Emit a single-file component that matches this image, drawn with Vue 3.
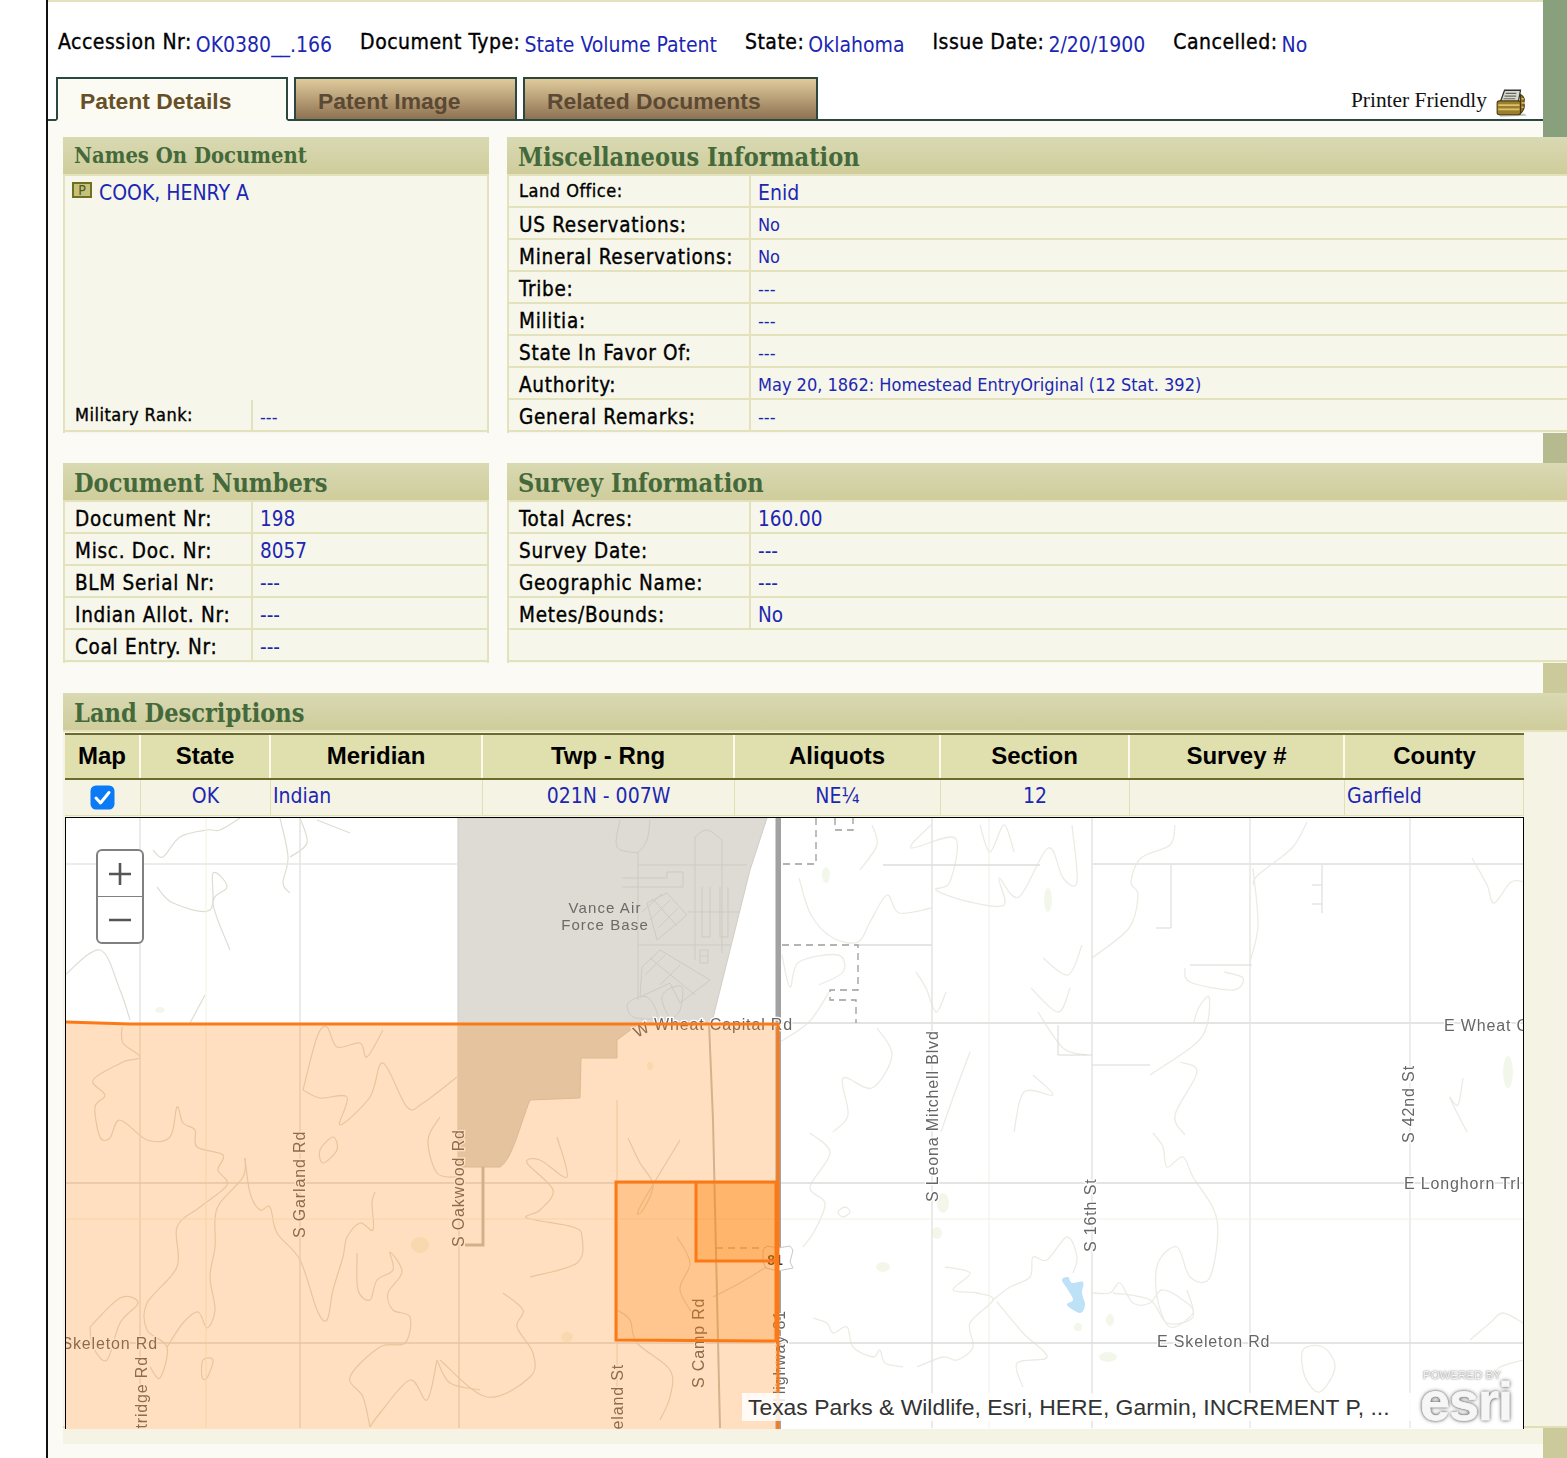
<script setup>
const info = [
  ['Accession Nr:', 'OK0380__.166'],
  ['Document Type:', 'State Volume Patent'],
  ['State:', 'Oklahoma'],
  ['Issue Date:', '2/20/1900'],
  ['Cancelled:', 'No']
]
const misc = [
  ['Land Office:', 'Enid', 'small', 'big'],
  ['US Reservations:', 'No', '', 'small'],
  ['Mineral Reservations:', 'No', '', 'small'],
  ['Tribe:', '---', '', 'small'],
  ['Militia:', '---', '', 'small'],
  ['State In Favor Of:', '---', '', 'small'],
  ['Authority:', 'May 20, 1862: Homestead EntryOriginal (12 Stat. 392)', '', 'small'],
  ['General Remarks:', '---', '', 'small']
]
const docs = [
  ['Document Nr:', '198'],
  ['Misc. Doc. Nr:', '8057'],
  ['BLM Serial Nr:', '---'],
  ['Indian Allot. Nr:', '---'],
  ['Coal Entry. Nr:', '---']
]
const survey = [
  ['Total Acres:', '160.00'],
  ['Survey Date:', '---'],
  ['Geographic Name:', '---'],
  ['Metes/Bounds:', 'No']
]
const heads = ['Map', 'State', 'Meridian', 'Twp - Rng', 'Aliquots', 'Section', 'Survey #', 'County']
const cells = [
  { t: 'OK' }, { t: 'Indian', left: true }, { t: '021N - 007W' }, { t: 'NE¼' }, { t: '12' }, { t: '' }, { t: 'Garfield', left: true }
]

function smooth(p, closed) {
  const n = p.length
  const at = i => closed ? p[(i + n) % n] : p[Math.max(0, Math.min(n - 1, i))]
  let d = `M${p[0][0]} ${p[0][1]}`
  const last = closed ? n : n - 1
  for (let i = 0; i < last; i++) {
    const a = at(i - 1), b = at(i), c = at(i + 1), e = at(i + 2)
    const c1x = b[0] + (c[0] - a[0]) / 6, c1y = b[1] + (c[1] - a[1]) / 6
    const c2x = c[0] - (e[0] - b[0]) / 6, c2y = c[1] - (e[1] - b[1]) / 6
    d += `C${c1x.toFixed(1)} ${c1y.toFixed(1)} ${c2x.toFixed(1)} ${c2y.toFixed(1)} ${c[0]} ${c[1]}`
  }
  return d + (closed ? 'Z' : '')
}

const openContours = [
  [[122,1027],[123,1043],[140,1057],[123,1062],[93,1080],[105,1095],[95,1107],[100,1137],[110,1138],[120,1120],[147,1140],[170,1137],[177,1107],[183,1123],[195,1130],[197,1147],[223,1155],[218,1170],[227,1185],[200,1207],[177,1227],[177,1267],[147,1303],[147,1330],[167,1347],[160,1378],[150,1367]],
  [[245,1158],[243,1177],[220,1203],[215,1220],[215,1247],[210,1277],[215,1310],[207,1328],[198,1312],[183,1323],[167,1347]],
  [[245,1158],[250,1193],[260,1210],[270,1207],[277,1233],[300,1260],[317,1310],[327,1320],[333,1290],[343,1257],[347,1237],[360,1223],[373,1230],[372,1203],[375,1192]],
  [[357,1253],[358,1290],[370,1300],[377,1280],[393,1270],[390,1252],[402,1272],[388,1293],[393,1310],[410,1317],[405,1343],[380,1347],[350,1377],[363,1397],[370,1427]],
  [[303,1090],[317,1037],[327,1027],[337,1047],[360,1043],[367,1057],[383,1030]],
  [[303,1090],[320,1098],[347,1097],[340,1125],[370,1097],[383,1063],[407,1107],[423,1103],[457,1077]],
  [[440,1117],[428,1140],[437,1173],[457,1177]],
  [[90,1327],[120,1298],[138,1303],[120,1323],[107,1360],[93,1347],[90,1327]],
  [[437,1360],[427,1400],[410,1380],[380,1413],[370,1427]],
  [[437,1360],[450,1383],[480,1390]],
  [[153,850],[163,857],[180,837],[207,830],[220,830],[240,818]],
  [[280,818],[288,857],[283,883],[290,893]],
  [[300,818],[307,843],[290,857]],
  [[317,820],[350,833]],
  [[157,887],[173,903],[210,910],[213,873],[227,887],[213,903],[230,950]],
  [[65,975],[100,950],[120,990],[130,1020]],
  [[190,1023],[205,995]],
  [[557,1137],[567,1177],[540,1160],[527,1163],[553,1190],[540,1210],[527,1218],[573,1227],[582,1237],[577,1263],[530,1277]],
  [[628,1138],[640,1163],[653,1185],[643,1210],[640,1207],[680,1140]],
  [[677,1237],[690,1263],[680,1290],[697,1320]],
  [[503,1293],[523,1310],[517,1327],[533,1353],[530,1377],[487,1397],[440,1360]],
  [[617,1310],[630,1320],[637,1343],[670,1370],[670,1397],[660,1420]],
  [[773,1263],[740,1283],[713,1297]]
]
const rightContours = [
  [[810,1133],[830,1153],[810,1187],[825,1203],[815,1230],[803,1247]],
  [[813,1318],[827,1323],[833,1333],[847,1327],[853,1347],[873,1357],[880,1350],[885,1363],[903,1367]],
  [[917,1367],[943,1357],[957,1360],[973,1347],[970,1323],[993,1300],[977,1293],[953,1290],[970,1273],[945,1267]],
  [[993,1300],[1010,1287],[1030,1277],[1033,1257],[1047,1260],[1067,1237],[1077,1257],[1073,1273]],
  [[997,1302],[1023,1333],[1047,1357],[1017,1363],[1023,1387]],
  [[1092,1293],[1110,1293],[1120,1283],[1133,1303],[1150,1303],[1162,1290],[1183,1300],[1193,1313],[1170,1327],[1157,1297],[1158,1263],[1177,1247],[1190,1277],[1210,1277],[1217,1220],[1193,1177],[1183,1157],[1167,1167],[1163,1147],[1153,1133]],
  [[1470,1340],[1490,1323],[1503,1313],[1523,1323]],
  [[1523,1360],[1500,1367],[1493,1377]],
  [[1113,1293],[1150,1300],[1167,1323],[1193,1317],[1187,1290]],
  [[799,878],[811,915],[833,938],[858,942],[870,922],[887,895],[899,913],[931,908]],
  [[872,825],[877,845],[860,870]],
  [[931,825],[911,848],[955,838],[950,882],[936,890],[970,902],[1004,905],[999,878],[1019,897],[1048,848],[1063,878],[1077,882],[1072,825]],
  [[980,825],[990,852],[1004,825],[1014,852]],
  [[819,985],[843,972],[838,955],[799,962],[790,987],[782,955]],
  [[829,992],[809,1022],[780,1042]],
  [[916,972],[926,988],[936,1012],[946,992]],
  [[877,1028],[892,1055],[872,1088],[843,1078],[848,1115],[833,1132]],
  [[970,1052],[955,1092],[941,1132]],
  [[1033,1075],[1053,1095],[1024,1092],[1014,1132]],
  [[1043,958],[1068,975],[1082,945]],
  [[1031,988],[1058,1012],[1070,988]],
  [[1038,1012],[1063,1048],[1087,1055]],
  [[1175,825],[1170,845],[1141,858],[1131,882],[1138,895],[1129,928],[1092,958]],
  [[1307,822],[1292,848],[1258,875],[1253,885]],
  [[1253,868],[1258,925],[1250,962]],
  [[1185,968],[1190,982],[1233,990],[1243,978],[1224,972]],
  [[1194,1022],[1199,1007],[1209,997],[1207,1025],[1194,1045],[1150,1075]],
  [[1180,1062],[1197,1072],[1175,1115],[1185,1135]],
  [[1472,858],[1487,885],[1494,903],[1511,882],[1524,882]],
  [[1463,1078],[1458,1105],[1450,1098],[1467,1132]]
]
const contoursLeft = [
  ...openContours.map(p => smooth(p, false)),
  smooth([[333,1137],[320,1150],[323,1163],[337,1150]], true),
  smooth([[203,1360],[213,1360],[207,1378],[202,1377]], true)
]
const contoursRight = [
  ...rightContours.map(p => smooth(p, false)),
  smooth([[838,1212],[845,1207],[850,1212],[843,1217]], true),
  smooth([[1303,1350],[1323,1347],[1335,1367],[1320,1392],[1305,1377]], true)
]
const lake = smooth([[1062,1280],[1068,1277],[1072,1283],[1083,1282],[1082,1293],[1085,1305],[1080,1313],[1067,1305],[1073,1300],[1068,1290]], true)
const blobA = smooth([[628,1003],[647,997],[657,1017],[633,1017]], true)
const blobB = smooth([[667,990],[682,987],[680,1010],[670,1017],[662,1000]], true)
const topLoop = smooth([[695,837],[707,830],[722,840]], false)
const baseCurveA = smooth([[620,820],[617,847],[638,853]], false)
const baseCurveB = smooth([[650,820],[647,840],[638,853]], false)

const patches = [
  [883,1267,7,5],[943,1203,6,10],[937,1233,5,6],[1078,1327,4,4],[1110,1320,4,6],[1108,1357,9,5],
  [1508,1072,5,16],[420,1245,9,8],[567,1337,6,5],[650,1066,3,4],[160,1010,5,3],[826,875,4,8],[1048,900,4,12]
]
const grid = [
  ['v',140,818,1428,'#e4e3df',1.4],['v',206,818,1428,'#f3f2df',1],['v',300,818,1428,'#e2e2df',1.4],
  ['v',459,1023,1428,'#dcdad5',1.2],['v',617,1100,1428,'#e2dfd6',1],['v',932,818,1428,'#e2e2e0',1.4],
  ['v',989,818,1428,'#efefe8',1],['v',1092,818,1428,'#e2e2e0',1.4],['v',1250,818,1428,'#e6e6e3',1.4],['v',1410,818,1428,'#e6e6e3',1.4],
  ['h',864,65,458,'#e6e6e4',1.4],['h',865,883,1040,'#dddddb',1.6],['h',864,1092,1524,'#e6e6e4',2],
  ['h',1023,780,1524,'#e4e4e2',2],['h',1183,65,1524,'#dddbd8',1.4],['h',1219,65,1524,'#f3f1e2',1],['h',1343,65,1524,'#dddbd8',1.6],
  ['h',945,858,932,'#dddddb',1.4],['h',1065,1092,1150,'#d8d8d5',1],['h',965,1190,1252,'#d8d8d5',1],
  ['h',928,1156,1171,'#d8d8d5',1],['v',1171,865,928,'#d8d8d5',1],['v',1322,865,913,'#d8d8d5',1],
  ['h',885,1312,1322,'#d8d8d5',1],['h',904,1312,1322,'#d8d8d5',1],['v',1058,1025,1055,'#d8d8d5',1],['h',1055,1058,1092,'#d8d8d5',1]
]
</script>

<template>
  <div class="page">
    <div class="gutter"></div>
    <div class="shell">
      <div class="band">
        <div class="band-main">
          <div class="info">
            <div v-for="i in info" :key="i[0]" class="info-item">
              <span class="info-label">{{ i[0] }}</span>
              <span class="info-value">{{ i[1] }}</span>
            </div>
          </div>
          <div class="tabs">
            <div class="tab active">Patent Details</div>
            <div class="tab t2">Patent Image</div>
            <div class="tab t3">Related Documents</div>
            <div class="printer">
              <span>Printer Friendly</span>
              <svg width="34" height="32" viewBox="0 0 32 30">
                <path d="M3 25 L28 25 L30 27 L5 28Z" fill="#999" opacity=".6" />
                <path d="M9 3 L24 3 L22 14 L5 14Z" fill="#d8d8cc" stroke="#333" stroke-width="1.2" />
                <path d="M10 6h10M9 8.5h11M8 11h11" stroke="#666" stroke-width="1.1" />
                <rect x="2" y="13" width="22" height="13" rx="2" fill="#9c7f2e" stroke="#4a3a10" />
                <path d="M3 17h20M3 21h20" stroke="#dcc26a" stroke-width="1.6" />
                <path d="M24 7 q5 3 3 8 q2 5 -3 10Z" fill="#8a6f28" stroke="#4a3a10" />
                <path d="M25 11h2M25 15h3M25 19h2" stroke="#dcc26a" stroke-width="1.2" />
              </svg>
            </div>
          </div>
          <div class="tab-gap"></div>
        </div>
        <div class="strip strip-a"></div>
      </div>

      <div class="row">
        <section class="panel p-left">
          <h2 class="head head-sm">Names On Document</h2>
          <div class="names">
            <span class="p-badge">P</span>
            <span class="name">COOK, HENRY A</span>
          </div>
          <div class="kv kv-left">
            <div class="k small">Military Rank:</div>
            <div class="v small">---</div>
          </div>
        </section>
        <section class="panel p-right">
          <h2 class="head">Miscellaneous Information</h2>
          <div v-for="m in misc" :key="m[0]" class="kv kv-right">
            <div class="k" :class="m[2]">{{ m[0] }}</div>
            <div class="v" :class="m[3]">{{ m[1] }}</div>
          </div>
        </section>
      </div>

      <div class="gap"><div class="gap-main"></div><div class="strip strip-b"></div></div>

      <div class="row">
        <section class="panel p-left">
          <h2 class="head">Document Numbers</h2>
          <div v-for="d in docs" :key="d[0]" class="kv kv-left">
            <div class="k">{{ d[0] }}</div>
            <div class="v">{{ d[1] }}</div>
          </div>
        </section>
        <section class="panel p-right">
          <h2 class="head">Survey Information</h2>
          <div v-for="s in survey" :key="s[0]" class="kv kv-right">
            <div class="k">{{ s[0] }}</div>
            <div class="v">{{ s[1] }}</div>
          </div>
          <div class="blank"></div>
        </section>
      </div>

      <div class="gap"><div class="gap-main"></div><div class="strip strip-c"></div></div>

      <div class="land-wrap">
        <section class="land">
          <h2 class="head land-head">Land Descriptions</h2>
          <div class="tbl thead">
            <div v-for="h in heads" :key="h" class="th">{{ h }}</div>
          </div>
          <div class="tbl tbody">
            <div class="td">
              <svg class="check" width="25" height="25" viewBox="0 0 25 25">
                <rect x="0.5" y="0.5" width="24" height="24" rx="5.5" fill="#0a7af5" />
                <path d="M6 13 L10.5 18 L19 7.5" fill="none" stroke="#fff" stroke-width="3" stroke-linecap="round" stroke-linejoin="round" />
              </svg>
            </div>
            <div v-for="(c, i) in cells" :key="i" class="td" :class="{ left: c.left }">{{ c.t }}</div>
          </div>
          <div class="map">
            <svg class="map-svg" width="1457" height="611" viewBox="66 818 1457 611">
              <rect x="65" y="818" width="1460" height="611" fill="#fff" />
              <ellipse v-for="(p, i) in patches" :key="'g' + i" :cx="p[0]" :cy="p[1]" :rx="p[2]" :ry="p[3]" fill="#f3f7ea" />
              <path d="M458 818 L767 818 L750 870 L715 1010 L712 1023 L640 1023 L617 1040 L617 1058 L581 1058 L580 1098 L530 1100 C520 1125 512 1160 500 1167 L458 1167Z" fill="#dedad4" stroke="#d0cdc6" />
              <path v-for="(d, i) in contoursLeft" :key="'cl' + i" :d="d" fill="none" stroke="#dfddd2" stroke-width="1.2" />
              <path v-for="(d, i) in contoursRight" :key="'cr' + i" :d="d" fill="none" stroke="#ecebe3" stroke-width="1.3" />
              <g v-for="(l, i) in grid" :key="'r' + i">
                <line v-if="l[0] === 'v'" :x1="l[1]" :x2="l[1]" :y1="l[2]" :y2="l[3]" :stroke="l[4]" :stroke-width="l[5]" />
                <line v-else :y1="l[1]" :y2="l[1]" :x1="l[2]" :x2="l[3]" :stroke="l[4]" :stroke-width="l[5]" />
              </g>
              <g fill="none" stroke="#cdcbc6" stroke-width="1">
                <path :d="baseCurveA" /><path :d="baseCurveB" /><path :d="topLoop" />
                <path d="M638 853V1000M695 837V960M722 840V953" />
                <path d="M622 878H667V872H683V887H622" />
                <path d="M638 865H747M638 945H730M688 912H740" />
                <path d="M647 903L667 893L687 915L657 940Z M652 898L677 926 M662 894L642 912 M670 900L650 920 M678 908L658 928" />
                <path d="M642 967L660 950L710 980L680 1003L670 983L640 997Z M650 958L695 995 M665 955L645 975 M680 965L660 985" />
                <path d="M702 887V937H710V887M720 887V937H728V887M700 950H708V963H700Z M700 956H708" />
                <path :d="blobA" /><path :d="blobB" />
              </g>
              <path d="M483 1167V1245H465" fill="none" stroke="#c4c1b9" stroke-width="3" />
              <path d="M709 1023 L713 1120 L720 1428" fill="none" stroke="#c6c3bc" stroke-width="2" />
              <path d="M716 1248H770" fill="none" stroke="#bcb9b2" stroke-width="1.5" stroke-dasharray="7 5" />
              <g fill="none" stroke="#9c9c9c" stroke-width="1.3" stroke-dasharray="7 5">
                <path d="M816 818V864H782" />
                <path d="M835 818V830H853V818" />
                <path d="M782 945H858V990H830V1000H856V1023" />
              </g>
              <path :d="lake" fill="#bde1f6" />
              <rect x="775.5" y="818" width="5.5" height="611" fill="#a2a2a2" />
              <path d="M763 1250 L767 1246 L778 1248 L790 1246 L793 1250 L790 1262 L793 1268 L778 1271 L766 1268 L763 1262Z" fill="#fff" stroke="#c8c8c8" />
              <text class="shield" x="775" y="1265" text-anchor="middle">81</text>

              <g class="lbl">
                <text class="lbl-sm" x="605" y="913" text-anchor="middle">Vance Air</text>
                <text class="lbl-sm" x="605" y="930" text-anchor="middle">Force Base</text>
                <text x="637" y="1038" transform="rotate(-28 637 1038)">W</text>
                <text x="654" y="1030">Wheat Capital Rd</text>
                <text x="1444" y="1031">E Wheat Capital</text>
                <text x="1404" y="1189">E Longhorn Trl</text>
                <text x="1157" y="1347">E Skeleton Rd</text>
                <text x="158" y="1349" text-anchor="end">W Skeleton Rd</text>
                <text transform="translate(305 1238) rotate(-90)">S Garland Rd</text>
                <text transform="translate(464 1247) rotate(-90)">S Oakwood Rd</text>
                <text transform="translate(938 1202) rotate(-90)">S Leona Mitchell Blvd</text>
                <text transform="translate(1096 1252) rotate(-90)">S 16th St</text>
                <text transform="translate(1414 1143) rotate(-90)">S 42nd St</text>
                <text transform="translate(704 1388) rotate(-90)">S Camp Rd</text>
                <text transform="translate(623 1364) rotate(-90)" text-anchor="end">Cleveland St</text>
                <text transform="translate(147 1356) rotate(-90)" text-anchor="end">Partridge Rd</text>
                <text transform="translate(785 1310) rotate(-90)" text-anchor="end">Highway 81</text>
              </g>

              <path d="M65 1022 L130 1024 L778 1024 L778 1429 L65 1429Z" fill="#ff7f00" fill-opacity=".25" />
              <path d="M616 1182 H776 V1341 L616 1340Z" fill="#ff7f00" fill-opacity=".25" />
              <path d="M696 1182 H776 V1261 H696Z" fill="#ff7f00" fill-opacity=".25" />
              <g fill="none" stroke="#fb7a17" stroke-width="3">
                <path d="M65 1022 L130 1024 L778 1024 L778 1429" />
                <path d="M616 1182 H776 V1341 L616 1340Z" />
                <path d="M696 1182 V1261 H776" />
              </g>
            </svg>
            <div class="zoom">
              <div class="zoom-btn">
                <svg width="26" height="26" viewBox="0 0 26 26"><path d="M13 2V24M2 13H24" stroke="#555" stroke-width="2.6" /></svg>
              </div>
              <div class="zoom-btn">
                <svg width="26" height="26" viewBox="0 0 26 26"><path d="M2 13H24" stroke="#555" stroke-width="2.6" /></svg>
              </div>
            </div>
            <div class="attrib">Texas Parks &amp; Wildlife, Esri, HERE, Garmin, INCREMENT P, ...</div>
            <div class="esri">
              <div class="esri-top">POWERED BY</div>
              <div class="esri-word">esri</div>
            </div>
          </div>
        </section>
      </div>

      <div class="foot">
        <div class="foot-main"><div class="foot-cream"></div></div>
        <div class="strip strip-c"></div>
      </div>
    </div>
  </div>
</template>

<style scoped>
* { box-sizing: border-box; }
.page {
  width: 1567px;
  height: 1458px;
  display: flex;
  overflow: hidden;
  background: #fff;
  font-family: "DejaVu Sans Condensed", "DejaVu Sans", sans-serif;
}
.gutter { width: 46px; flex: none; }
.shell {
  width: 1521px;
  flex: none;
  border-left: 2px solid #111;
  display: flex;
  flex-direction: column;
  overflow: hidden;
  background: #fbfaf4;
}
.band { display: flex; height: 137px; flex: none; }
.band-main {
  flex: 1;
  display: flex;
  flex-direction: column;
  background: #fff;
  border-top: 2px solid #e3e2bd;
}
.strip { width: 24px; flex: none; }
.strip-a { background: #88a07c; }
.strip-b { background: #b5bb8e; }
.strip-c { background: #cbca9a; }
.info { display: flex; gap: 28px; padding: 26px 0 0 10px; height: 75px; }
.info-item { display: flex; gap: 4px; align-items: flex-start; }
.info-label {
  font-size: 21px;
  line-height: 28px;
  letter-spacing: 0.5px;
  color: #000;
  -webkit-text-stroke: 0.35px #000;
  white-space: nowrap;
}
.info-value {
  font-size: 21px;
  line-height: 28px;
  padding-top: 3px;
  color: #1c27b3;
  white-space: nowrap;
}
.tabs {
  display: flex;
  align-items: flex-end;
  gap: 6px;
  height: 44px;
  flex: none;
  padding-left: 8px;
  border-bottom: 2px solid #2a4740;
}
.tab {
  height: 44px;
  margin-bottom: -2px;
  border: 2px solid #2a4740;
  font-family: "Liberation Sans", Arial, sans-serif;
  font-weight: 700;
  font-size: 22.9px;
  line-height: 45px;
  background: linear-gradient(#e0cb9c, #8d7252);
  color: #5c4933;
  padding-left: 22px;
}
.tab.active {
  width: 232px;
  background: #fbfbf4;
  border-bottom: 2px solid #fbfbf4;
  color: #675028;
}
.t2 { width: 223px; }
.t3 { width: 295px; }
.printer {
  margin-left: auto;
  display: flex;
  align-items: center;
  gap: 8px;
  padding: 4px 14px 0 0;
  height: 42px;
  font-family: "Liberation Serif", serif;
  font-size: 21.4px;
  color: #111;
}
.printer svg { margin-top: 6px; }
.tab-gap { flex: 1; background: #fbfaf4; }

.row {
  display: flex;
  flex: none;
  gap: 18px;
  padding-left: 15px;
}
.panel {
  border-left: 2px solid #e3e2bd;
  background: #f6f6ea;
  padding-bottom: 1px;
}
.p-left { width: 426px; border-right: 2px solid #e3e2bd; flex: none; }
.p-right { width: 1062px; flex: none; }
.head {
  margin: 0 0 0 -2px;
  height: 39px;
  padding-left: 11px;
  border-bottom: 2px solid #e3e2bd;
  background: linear-gradient(#d9d9b3, #cfcd9b);
  font-family: "DejaVu Serif Condensed", "Liberation Serif", serif;
  font-weight: 700;
  font-size: 25.1px;
  line-height: 40px;
  color: #44693a;
  white-space: nowrap;
}
.p-left .head { margin-right: -2px; }
.head-sm { font-size: 21.8px; line-height: 38px; }
.names {
  height: 224px;
  display: flex;
  align-items: flex-start;
  gap: 7px;
  padding: 4px 0 0 7px;
}
.p-badge {
  width: 20px;
  height: 16px;
  margin-top: 2px;
  border: 2px solid #6f7020;
  background: #c3c17c;
  color: #55561a;
  font-size: 14px;
  line-height: 12px;
  text-align: center;
}
.name { font-size: 21px; line-height: 27px; color: #1c27b3; }
.kv {
  display: grid;
  height: 32px;
  border-bottom: 2px solid #e3e2bd;
}
.kv-left { grid-template-columns: 188px 1fr; }
.kv-right { grid-template-columns: 242px 1fr; }
.k, .v {
  font-size: 20.5px;
  line-height: 34px;
  height: 30px;
  white-space: nowrap;
}
.k {
  padding-left: 10px;
  border-right: 2px solid #e3e2bd;
  letter-spacing: 0.72px;
  color: #000;
  -webkit-text-stroke: 0.35px #000;
}
.v { padding-left: 7px; color: #1c27b3; }
.k.small { font-size: 18px; line-height: 30px; letter-spacing: 0.5px; }
.v.small { font-size: 18px; }
.v.big { font-size: 21px; }
.blank { height: 32px; border-bottom: 2px solid #e3e2bd; }
.gap { display: flex; height: 30px; flex: none; }
.gap-main { flex: 1; }
.land-wrap { padding-left: 15px; flex: none; }
.land {
  width: 1504px;
  height: 735px;
  background: #f5f3e4;
  border-bottom: 2px solid #dfe0b6;
}
.land-head { margin-left: 0; }
.tbl {
  display: grid;
  grid-template-columns: 76px 130px 212px 252px 206px 189px 215px 179px;
  width: 1459px;
  margin-left: 2px;
}
.thead {
  height: 47px;
  margin-top: 1px;
  border-top: 2px solid #6c6a2c;
  border-bottom: 2px solid #6c6a2c;
  background: #e0dfae;
}
.th {
  border-right: 2px solid #fbfaec;
  font-family: "Liberation Sans", Arial, sans-serif;
  font-weight: 700;
  font-size: 24px;
  line-height: 42px;
  text-align: center;
  color: #000;
}
.th:last-child { border-right: 0; }
.tbody { height: 36px; border-bottom: 1px solid #e0e0b5; }
.td {
  border-right: 1px solid #e0e0b5;
  font-size: 21px;
  line-height: 32px;
  text-align: center;
  color: #1c27b3;
}
.td.left { text-align: left; padding-left: 2px; }
.check { display: block; margin: 5px 0 0 25px; }
.map {
  position: relative;
  width: 1459px;
  height: 612px;
  margin: 1px 0 0 2px;
  border: 1px solid #000;
  border-bottom: 0;
  overflow: hidden;
  background: #fff;
}
.map-svg { display: block; filter: blur(0.35px); }
.lbl text {
  font-family: "Liberation Sans", Arial, sans-serif;
  font-size: 16px;
  letter-spacing: 0.85px;
  fill: #666;
  paint-order: stroke;
  stroke: #fff;
  stroke-width: 2.5px;
}
.lbl .lbl-sm { font-size: 15px; letter-spacing: 1.1px; stroke: none; fill: #6a6a68; }
.shield {
  font-family: "Liberation Sans", Arial, sans-serif;
  font-size: 14px;
  font-weight: 700;
  fill: #333;
}
.zoom {
  position: absolute;
  left: 30px;
  top: 31px;
  width: 48px;
  height: 95px;
  border: 2px solid #808080;
  border-radius: 6px;
  background: #fff;
  overflow: hidden;
}
.zoom-btn {
  height: 46px;
  display: flex;
  align-items: center;
  justify-content: center;
}
.zoom-btn:first-child { border-bottom: 1.5px solid #808080; }
.attrib {
  position: absolute;
  left: 676px;
  top: 575px;
  height: 28px;
  padding: 0 22px 0 6px;
  background: rgba(255, 255, 255, 0.85);
  font-family: "Liberation Sans", Arial, sans-serif;
  font-size: 22.9px;
  line-height: 28px;
  color: #333;
  white-space: nowrap;
}
.esri {
  position: absolute;
  right: 9px;
  bottom: 8px;
  width: 94px;
  text-align: left;
  font-family: "Liberation Sans", Arial, sans-serif;
  color: #f6f6f6;
}
.esri-top {
  font-size: 11.5px;
  line-height: 12px;
  padding-left: 3px;
  text-shadow: 0 0 2px #555;
  white-space: nowrap;
}
.esri-word {
  font-size: 54px;
  line-height: 40px;
  font-weight: 700;
  letter-spacing: -1px;
  -webkit-text-stroke: 0.8px #f6f6f6;
  text-shadow: 0 0 4px #444, 0 0 2px #666;
}
.foot { display: flex; flex: 1; }
.foot-main { flex: 1; padding-left: 15px; }
.foot-cream { height: 16px; background: #f5f3e4; }
</style>
